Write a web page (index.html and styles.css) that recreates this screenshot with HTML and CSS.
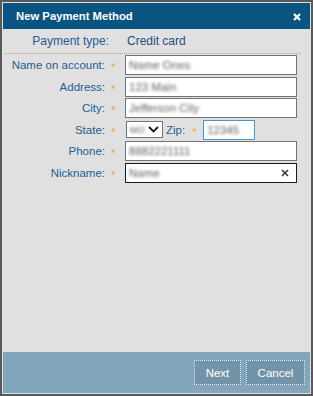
FILE: index.html
```html
<!DOCTYPE html>
<html lang="en">
<head>
  <meta charset="UTF-8" />
  <meta name="viewport" content="width=device-width, initial-scale=1.0"/>
  <title>New Payment Method</title>
  <link rel="stylesheet" href="styles.css">
</head>
<body>
  <div class="dialog">
    <div class="titlebar">
      <span class="title">New Payment Method</span>
      <span class="close">
        <svg width="8" height="8" viewBox="0 0 8 8"><path d="M1 1L7 7M7 1L1 7" stroke="#fff" stroke-width="2.2"/></svg>
      </span>
    </div>

    <div class="content">
      <div class="type-row">
        <span class="label">Payment type:</span>
        <span class="type-value">Credit card</span>
      </div>

      <div class="form">
        <label class="label">Name on account:</label>
        <span class="req">*</span>
        <div class="field"><span class="blur">Name Ones</span></div>

        <label class="label">Address:</label>
        <span class="req">*</span>
        <div class="field"><span class="blur">123 Main</span></div>

        <label class="label">City:</label>
        <span class="req">*</span>
        <div class="field"><span class="blur">Jefferson City</span></div>

        <label class="label">State:</label>
        <span class="req">*</span>
        <div class="state-line">
          <div class="select">
            <span class="blur small">MO</span>
            <svg width="11" height="7" viewBox="0 0 11 7"><path d="M1 1L5.5 5.5L10 1" fill="none" stroke="#1a1a1a" stroke-width="1.8"/></svg>
          </div>
          <span class="label zip-label">Zip:</span>
          <span class="req">*</span>
          <div class="field zip"><span class="blur">12345</span></div>
        </div>

        <label class="label">Phone:</label>
        <span class="req">*</span>
        <div class="field"><span class="blur">8882221111</span></div>

        <label class="label">Nickname:</label>
        <span class="req">*</span>
        <div class="field active">
          <span class="blur">Name</span>
          <svg class="clear" width="8" height="8" viewBox="0 0 8 8"><path d="M1 1L7 7M7 1L1 7" stroke="#333" stroke-width="1.5"/></svg>
        </div>
      </div>
    </div>

    <div class="footer">
      <button class="btn next">Next</button>
      <button class="btn cancel">Cancel</button>
    </div>
  </div>
</body>
</html>
```

FILE: styles.css
```css
body {
  margin: 0;
  padding: 0;
  font-family: 'Liberation Sans', Arial, sans-serif;
  font-size: 11px;
  background: #e0e0e0;
}

.dialog {
  width: 313px;
  height: 396px;
  box-sizing: border-box;
  border: 2px solid #5a5a5a;
  padding: 1px;
  background: #e0e0e0;
  display: flex;
  flex-direction: column;
}

.titlebar {
  height: 26px;
  background: #0a5482;
  color: #fff;
  display: flex;
  align-items: center;
  justify-content: space-between;
  padding: 0 9px 0 13px;
}
.title {
  font-weight: bold;
  font-size: 11.3px;
}
.close {
  display: flex;
  margin-top: 1px;
}

.content {
  flex: 1;
}

.type-row {
  height: 24px;
  display: grid;
  grid-template-columns: 102px 20px 1fr;
  align-items: center;
  border-bottom: 1px dotted #a8a8a8;
  margin: 0 9px 0 2px;
}
.type-row .label {
  font-size: 12px;
  margin-right: -2px;
}
.type-value {
  grid-column: 3;
  color: #1e4f7a;
  font-size: 12px;
}

.label {
  color: #1f5d92;
  text-align: right;
  font-size: 11.5px;
}

.form {
  display: grid;
  grid-template-columns: 102px 20px 172px;
  grid-auto-rows: 20px;
  row-gap: 1.5px;
  align-items: center;
  margin-top: 1px;
}

.req {
  color: #f0a040;
  font-size: 11px;
  padding: 4px 0 0 6px;
}

.field {
  height: 20px;
  box-sizing: border-box;
  border: 1px solid #737373;
  background: #fff;
  display: flex;
  align-items: center;
  padding: 0 3px;
}
.field.active {
  border-color: #1a1a1a;
  justify-content: space-between;
  padding-right: 7px;
}
.field.zip {
  width: 52px;
  border-color: #3c9ad6;
}

.blur {
  color: transparent;
  text-shadow: 0 0 3px rgba(70, 70, 70, 0.85);
  font-size: 11.5px;
  white-space: nowrap;
}
.blur.small {
  font-size: 9px;
}

.state-line {
  display: flex;
  align-items: center;
  height: 20px;
}
.select {
  width: 37px;
  height: 17px;
  box-sizing: border-box;
  border: 1px solid #737373;
  background: #fff;
  margin-left: 1px;
  display: flex;
  align-items: center;
  justify-content: space-between;
  padding: 0 3px 0 3px;
}
.zip-label {
  margin-left: 3px;
}
.state-line .req {
  width: 18px;
  box-sizing: border-box;
  padding-left: 7px;
}

.footer {
  height: 41px;
  background: #82a6bc;
  display: flex;
  align-items: center;
  justify-content: flex-end;
  gap: 5px;
  padding-right: 5px;
}
.btn {
  height: 25px;
  background: #7393a8;
  border: 1px dotted #e8eef2;
  color: #fff;
  font-family: 'Liberation Sans', Arial, sans-serif;
  font-size: 11.5px;
  padding: 0;
  cursor: pointer;
}
.btn.next {
  width: 47px;
}
.btn.cancel {
  width: 59px;
}
```
